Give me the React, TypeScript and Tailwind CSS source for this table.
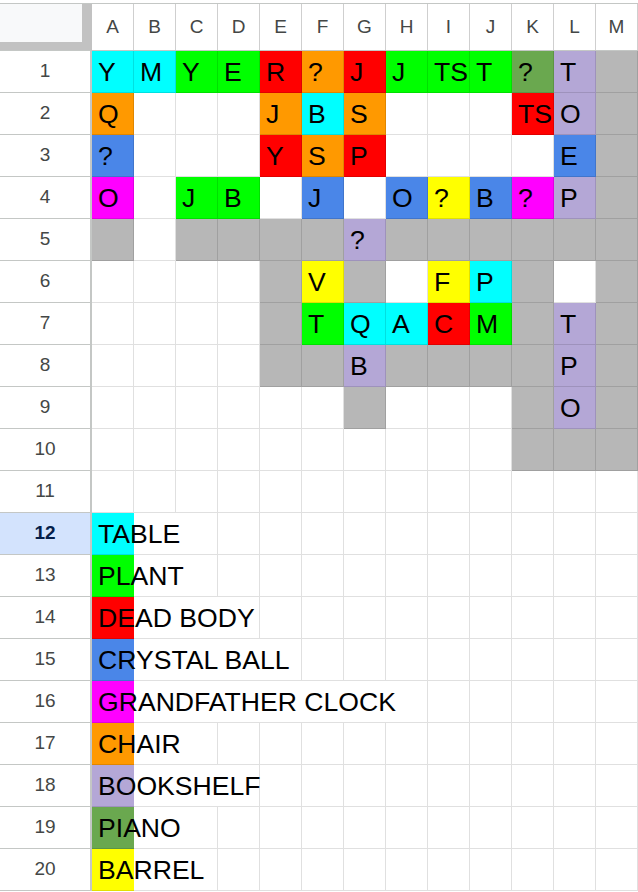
const fills: Record<string, string> = {
  w: "bg-white",
  c: "bg-[#00ffff]",
  g: "bg-[#00ff00]",
  r: "bg-[#ff0000]",
  o: "bg-[#ff9900]",
  b: "bg-[#4a86e8]",
  m: "bg-[#ff00ff]",
  l: "bg-[#b4a7d6]",
  p: "bg-[#6aa84f]",
  y: "bg-[#ffff00]",
  x: "bg-[#b7b7b7]",
};

const columns = ["A", "B", "C", "D", "E", "F", "G", "H", "I", "J", "K", "L", "M"];

// each cell is "fill:text"
const board = [
  "c:Y c:M g:Y g:E r:R o:? r:J g:J g:TS g:T p:? l:T x:",
  "o:Q w: w: w: o:J c:B o:S w: w: w: r:TS l:O x:",
  "b:? w: w: w: r:Y o:S r:P w: w: w: w: b:E x:",
  "m:O w: g:J g:B w: b:J w: b:O y:? b:B m:? l:P x:",
  "x: w: x: x: x: x: l:? x: x: x: x: x: x:",
  "w: w: w: w: x: y:V x: w: y:F c:P x: w: x:",
  "w: w: w: w: x: g:T c:Q c:A r:C g:M x: l:T x:",
  "w: w: w: w: x: x: l:B x: x: x: x: l:P x:",
  "w: w: w: w: w: w: x: w: w: w: x: l:O x:",
  "w: w: w: w: w: w: w: w: w: w: x: x: x:",
  "w: w: w: w: w: w: w: w: w: w: w: w: w:",
].map((row) =>
  row.split(" ").map((cell) => {
    const [fill, text] = cell.split(":");
    return { fill, text };
  })
);

const legend = [
  { fill: "c", label: "TABLE", span: 2 },
  { fill: "g", label: "PLANT", span: 2 },
  { fill: "r", label: "DEAD BODY", span: 3 },
  { fill: "b", label: "CRYSTAL BALL", span: 4 },
  { fill: "m", label: "GRANDFATHER CLOCK", span: 7 },
  { fill: "o", label: "CHAIR", span: 2 },
  { fill: "l", label: "BOOKSHELF", span: 3 },
  { fill: "p", label: "PIANO", span: 2 },
  { fill: "y", label: "BARREL", span: 2 },
];

const cellText = "font-['Liberation_Sans',Arial,sans-serif] text-[26.6px] text-black";
const gridLine = "border-[rgba(0,0,0,0.12)]";

function RowHeader({ n, selected }: { n: number; selected?: boolean }) {
  return (
    <div
      className={`flex h-[42px] w-[92px] shrink-0 items-center justify-center border-b border-r-2 border-[#c4c7c5] font-['Liberation_Sans',Arial,sans-serif] text-[19px] ${
        selected ? "bg-[#d3e3fd] font-bold text-[#041e49]" : "bg-white text-[#444746]"
      }`}
    >
      {n}
    </div>
  );
}

export default function App() {
  return (
    <div className="h-[892px] w-[638px] overflow-hidden bg-white pt-[3px]">
      <div className="flex h-[48px] border-y border-[#c4c7c5]">
        <div className="w-[92px] shrink-0 bg-[#c2c2c2]">
          <div className="h-[38px] w-[82px] bg-[#f8f9fa]" />
        </div>
        {columns.map((col) => (
          <div
            key={col}
            className="flex w-[42px] shrink-0 items-center justify-center border-r border-[#cfcfcf] font-['Liberation_Sans',Arial,sans-serif] text-[19px] text-[#444746]"
          >
            {col}
          </div>
        ))}
      </div>

      {board.map((row, r) => (
        <div key={r} className="flex">
          <RowHeader n={r + 1} />
          {row.map((cell, c) => (
            <div
              key={c}
              className={`flex h-[42px] w-[42px] shrink-0 items-center overflow-hidden whitespace-nowrap border-b border-r ${gridLine} pl-[6px] pt-[2px] ${fills[cell.fill]} ${cellText}`}
            >
              {cell.text}
            </div>
          ))}
        </div>
      ))}

      {legend.map((item, i) => (
        <div key={item.label} className="flex">
          <RowHeader n={12 + i} selected={i === 0} />
          <div
            className={`flex h-[42px] w-[42px] shrink-0 items-center whitespace-nowrap border-b ${gridLine} pl-[6px] pt-[2px] ${fills[item.fill]} ${cellText}`}
          >
            <span className="relative z-10">{item.label}</span>
          </div>
          <div
            className={`h-[42px] shrink-0 border-b border-r ${gridLine} bg-white`}
            style={{ width: item.span * 42 }}
          />
          {Array.from({ length: 12 - item.span }).map((_, k) => (
            <div key={k} className={`h-[42px] w-[42px] shrink-0 border-b border-r ${gridLine} bg-white`} />
          ))}
        </div>
      ))}
    </div>
  );
}
